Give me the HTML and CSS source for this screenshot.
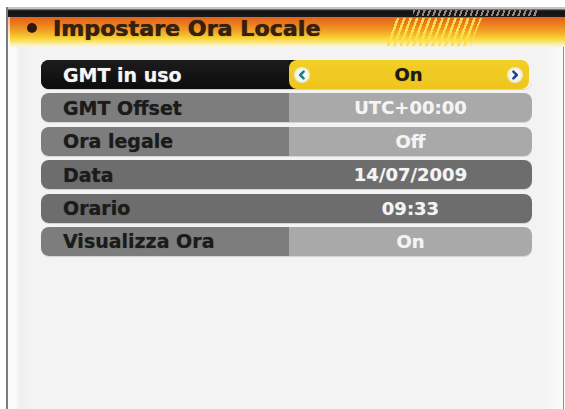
FILE: index.html
```html
<!DOCTYPE html>
<html lang="it">
<head>
<meta charset="utf-8">
<title>Impostare Ora Locale</title>
<link rel="stylesheet" href="styles.css">
</head>
<body>
<div class="screen">
  <header class="header">
    <div class="topbar"><span class="ticks"></span></div>
    <div class="titlebar">
      <span class="bullet"></span>
      <h1 class="title">Impostare Ora Locale</h1>
      <span class="stripes"></span>
    </div>
  </header>
  <main class="content">
    <ul class="menu">
      <li class="row row-active">
        <span class="label">GMT in uso</span>
        <span class="value">
          <span class="arrow arrow-left"><svg viewBox="0 0 14 14" width="14" height="14"><path d="M8.6 3.6 L5.2 7 L8.6 10.4" fill="none" stroke="#1e7d86" stroke-width="2.6" stroke-linecap="round" stroke-linejoin="round"/></svg></span>
          <span class="text">On</span>
          <span class="arrow arrow-right"><svg viewBox="0 0 14 14" width="14" height="14"><path d="M5.4 3.6 L8.8 7 L5.4 10.4" fill="none" stroke="#243f96" stroke-width="2.6" stroke-linecap="round" stroke-linejoin="round"/></svg></span>
        </span>
      </li>
      <li class="row">
        <span class="label">GMT Offset</span>
        <span class="value"><span class="text">UTC+00:00</span></span>
      </li>
      <li class="row">
        <span class="label">Ora legale</span>
        <span class="value"><span class="text">Off</span></span>
      </li>
      <li class="row row-fixed">
        <span class="label">Data</span>
        <span class="value"><span class="text">14/07/2009</span></span>
      </li>
      <li class="row row-fixed">
        <span class="label">Orario</span>
        <span class="value"><span class="text">09:33</span></span>
      </li>
      <li class="row">
        <span class="label">Visualizza Ora</span>
        <span class="value"><span class="text">On</span></span>
      </li>
    </ul>
  </main>
</div>
</body>
</html>
```

FILE: styles.css
```css
* { box-sizing: border-box; }

html, body {
  margin: 0;
  padding: 0;
  background: #ffffff;
  width: 565px;
  height: 409px;
  overflow: hidden;
}

body {
  font-family: "DejaVu Sans", "Liberation Sans", sans-serif;
}

.screen {
  margin: 7px 0 0 6px;
  width: 559px;
  height: 402px;
  border-left: 2px solid #7c7c7c;
  display: flex;
  flex-direction: column;
  background: #ffffff;
}

.header {
  position: relative;
  flex: 0 0 auto;
}

.topbar {
  position: relative;
  height: 10px;
  background: linear-gradient(to bottom, #c4c4c4 0, #c4c4c4 2px, #2a2a2a 3px, #121212 5px, #1a1a1a 10px);
}

.ticks {
  position: absolute;
  left: 405px;
  top: 3px;
  width: 124px;
  height: 6px;
  background: repeating-linear-gradient(110deg, #a3958e 0, #a3958e 2px, transparent 2px, transparent 5px);
  opacity: 0.9;
}

.titlebar {
  position: relative;
  height: 30px;
  display: flex;
  align-items: flex-start;
  padding-left: 19px;
  background: linear-gradient(to bottom, #e2621a 0, #ea781e 6px, #f09624 12px, #f5bd2c 18px, #f8d83a 22px, #f9e47a 25px, #fbf1c6 28px, #f3f3f3 31px);
}

.titlebar::before {
  content: "";
  position: absolute;
  left: 0;
  top: 0;
  bottom: 0;
  width: 2px;
  background: linear-gradient(to bottom, rgba(255,255,255,0.5), rgba(255,255,255,0.9));
}

.bullet {
  flex: 0 0 auto;
  width: 10px;
  height: 10px;
  margin-top: 6px;
  border-radius: 50%;
  background: radial-gradient(circle at 45% 45%, #2c1c10 0, #2a1a0e 55%, rgba(42,26,14,0.6) 100%);
}

.title {
  margin: 1px 0 0 16px;
  font-size: 22px;
  line-height: 22px;
  font-weight: bold;
  color: #36200e;
  letter-spacing: 0.1px;
  text-shadow: 0 0 1px rgba(54,32,14,0.8), 0.5px 0 0 rgba(54,32,14,0.6);
  white-space: nowrap;
}

.stripes {
  position: absolute;
  left: 376px;
  top: 1px;
  width: 98px;
  height: 28px;
  background: repeating-linear-gradient(110deg, #fbe048 0, #fbe048 2.4px, transparent 2.4px, transparent 6px);
  clip-path: polygon(12px 0, 98px 0, 86px 100%, 0 100%);
}

.content {
  flex: 1 1 auto;
  margin-right: 1px;
  border-right: 1px solid #8e8e8e;
  padding: 13px 0 0 33px;
  background:
    linear-gradient(to left, #fafafa 0, #f7f7f7 10px, #f3f3f3 18px, rgba(243,243,243,0) 24px),
    linear-gradient(to right, #fbfbfb 0, #fafafa 8px, #efefef 12px, #f3f3f3 20px, #f3f3f3 100%);
}

.menu {
  list-style: none;
  margin: 0;
  padding: 0;
  width: 491px;
  display: flex;
  flex-direction: column;
  gap: 4.4px;
}

.row {
  height: 29px;
  display: grid;
  grid-template-columns: 248px 1fr;
  border-radius: 8px;
  overflow: hidden;
  font-weight: bold;
  box-shadow: 0 1px 0 rgba(0,0,0,0.12);
}

.label {
  display: flex;
  align-items: center;
  padding-left: 22px;
  font-size: 19px;
  color: #1b1b1b;
  background: #7d7d7d;
  white-space: nowrap;
  text-shadow: 0 0 1px rgba(0,0,0,0.45);
}

.value {
  display: flex;
  align-items: center;
  justify-content: center;
  font-size: 18px;
  color: #f4f4f4;
  background: #a9a9a9;
  white-space: nowrap;
  text-shadow: 0 0 1px rgba(255,255,255,0.4);
}

.row-fixed .label,
.row-fixed .value {
  background: #6d6d6d;
}

.row-active {
  background: linear-gradient(to right, #111 0, #111 260px, transparent 260px);
}

.row-active .label {
  background: linear-gradient(to bottom, #1c1c1c, #0c0c0c);
  color: #f6f6f6;
  text-shadow: 0 0 1px rgba(255,255,255,0.5);
}

.row-active .value {
  justify-content: space-between;
  padding: 0 6px 0 5px;
  margin-right: 3px;
  background: linear-gradient(to bottom, #f3cf28, #eec51c);
  color: #1d1a10;
  border-radius: 8px;
  text-shadow: 0 0 1px rgba(29,26,16,0.5);
}

.arrow {
  width: 16px;
  height: 16px;
  border-radius: 50%;
  display: flex;
  align-items: center;
  justify-content: center;
  background: radial-gradient(circle, #ffffff 0, #f4f6f0 45%, #e9ecd0 65%, rgba(245,225,130,0.5) 100%);
}

.arrow svg { display: block; }
```
